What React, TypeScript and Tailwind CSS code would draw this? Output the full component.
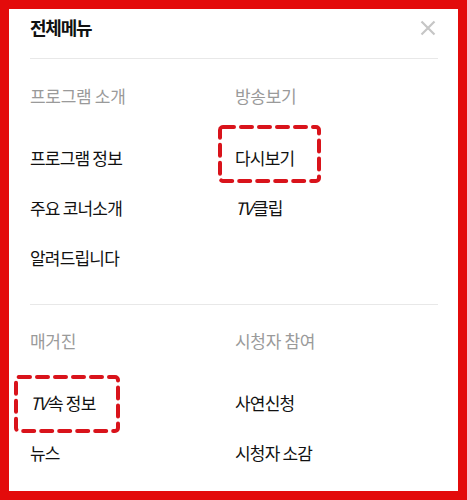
import React from 'react';

type Item = { label: React.ReactNode; box?: string };

const sections: { title: string; items: Item[] }[][] = [
    [
        {
            title: '프로그램 소개',
            items: [{ label: '프로그램 정보' }, { label: '주요 코너소개' }, { label: '알려드립니다' }],
        },
        {
            title: '방송보기',
            items: [
                { label: '다시보기', box: 'left-[-17px] top-[-8px] w-[103px] h-[58px]' },
                { label: <><i className="tracking-[-2px] pr-[2px]">TV</i>클립</> },
            ],
        },
    ],
    [
        {
            title: '매거진',
            items: [
                { label: <><i className="tracking-[-2px] pr-[2px]">TV</i>속 정보</>, box: 'left-[-16px] top-[-3px] w-[106px] h-[58px]' },
                { label: '뉴스' },
            ],
        },
        {
            title: '시청자 참여',
            items: [{ label: '사연신청' }, { label: '시청자 소감' }],
        },
    ],
];

// dashed annotation box drawn over the item
const DashBox = ({ className }: { className: string }) => (
    <svg className={`pointer-events-none absolute ${className}`} preserveAspectRatio="none">
        <rect
            x="2"
            y="2"
            width="calc(100% - 4px)"
            height="calc(100% - 4px)"
            rx="3"
            fill="none"
            stroke="#d9131b"
            strokeWidth="4"
            strokeDasharray="11 7"
            strokeLinecap="round"
        />
    </svg>
);

const App = () => {
    return (
        <div
            className="h-[500px] w-[467px] bg-[#e30b0b] p-[9px]"
            style={{ fontFamily: '"Noto Sans CJK KR", "Noto Sans", sans-serif' }}
        >
            <div className="h-full bg-white pl-[21px] pr-[20px]">
                <div className="flex h-[49px] items-start justify-between">
                    <h1 className="mt-[6px] text-[18px] font-bold leading-[24px] tracking-[-1.2px] text-[#111]">전체메뉴</h1>
                    <svg width="16" height="16" viewBox="0 0 16 16" className="mr-[2px] mt-[11px]">
                        <path d="M1.5 1.5 L14.5 14.5 M14.5 1.5 L1.5 14.5" stroke="#c6c6c6" strokeWidth="2.2" />
                    </svg>
                </div>
                {sections.map((row, i) => (
                    <div
                        key={i}
                        className={`grid grid-cols-[205px_1fr] border-t border-[#e8e8e8] ${i === 0 ? 'pt-[25px] pb-[21px]' : 'pt-[24px]'}`}
                    >
                        {row.map((col) => (
                            <div key={col.title}>
                                <h2 className="h-[24px] text-[17px] leading-[24px] tracking-[-0.3px] text-[#9a9a9a]">
                                    {col.title}
                                </h2>
                                <ul className="mt-[25px]">
                                    {col.items.map((item, j) => (
                                        <li key={j} className="relative flex h-[50px] items-center text-[17px] tracking-[-0.8px] text-[#111]">
                                            <span>{item.label}</span>
                                            {item.box && <DashBox className={item.box} />}
                                        </li>
                                    ))}
                                </ul>
                            </div>
                        ))}
                    </div>
                ))}
            </div>
        </div>
    );
};

export default App;
